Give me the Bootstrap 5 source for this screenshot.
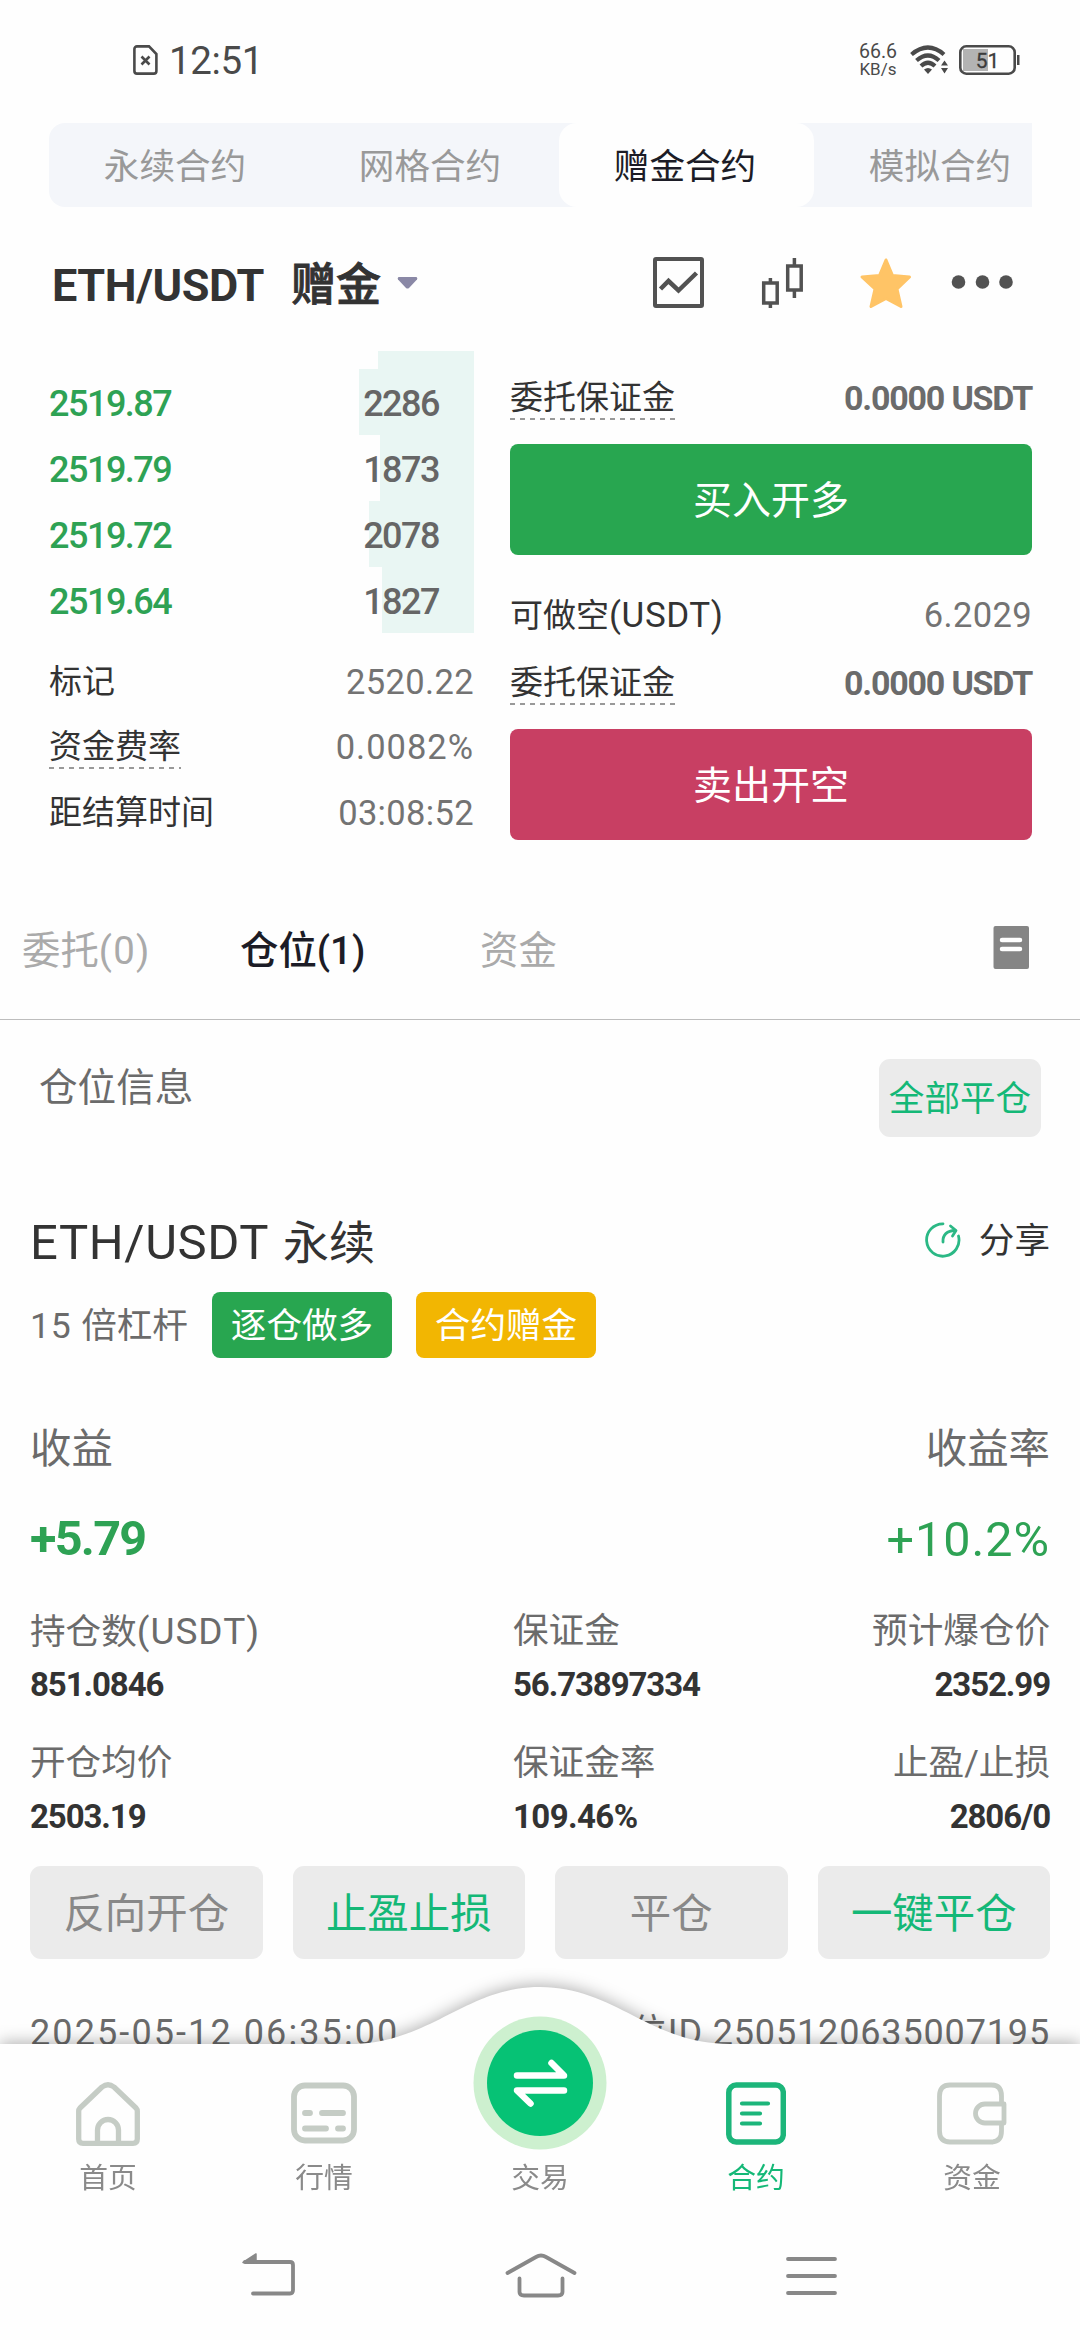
<!DOCTYPE html>
<html lang="zh-CN">
<head>
<meta charset="utf-8">
<meta name="viewport" content="width=device-width, initial-scale=1">
<title>ETH/USDT 赠金合约</title>
<link rel="stylesheet" href="https://cdn.jsdelivr.net/npm/bootstrap@5.3.0/dist/css/bootstrap.min.css">
<style>
  body { font-family: Roboto, "Noto Sans CJK SC", sans-serif; background: #fefefe; color: #333; font-size: 33px; line-height: 1; width: 1080px; height: 2340px; overflow: hidden; }
  svg { display: block; flex: none; }
  .screen { height: 2340px; overflow: hidden; }

  .status-bar { height: 120px; padding: 0 60px 0 133px; color: #4a4a4a; }
  .clock { font-size: 38.5px; letter-spacing: -.4px; margin-left: 11px; padding-top: 2px; }
  .net-speed { font-size: 19.5px; line-height: 18px; margin-right: 13px; }
  .net-speed .unit { font-size: 17px; line-height: 17px; }
  .battery { width: 61px; height: 30px; margin-left: 11px; }

  .mode-tabs { height: 84px; margin: 3px 48px 0 49px; background: #f4f6fa; border-radius: 16px 0 0 16px; overflow: hidden; }
  .mode-tabs .mode { flex: 0 0 255px; font-size: 35.6px; color: #999; border-radius: 18px; padding: 5px 3px 0 0; }
  .mode-tabs .mode.active { background: #fefefe; color: #1c1c26; }

  .pair-bar { height: 144px; padding: 8px 66px 0 52px; }
  .pair-name { font-size: 45px; font-weight: 700; letter-spacing: -.4px; padding-top: 4px; }
  .pair-kind { font-size: 45px; font-weight: 500; margin-left: 27px; -webkit-text-stroke: .9px #333; padding-top: 4px; }

  .trade-area { height: 540px; padding: 0 48px 0 49px; }
  .book { width: 425px; }
  .depth-row { height: 66px; padding: 4px 35px 0 0; font-weight: 500; font-size: 36px; letter-spacing: -1.5px; background: linear-gradient(#e9f6f3, #e9f6f3) right / var(--depth) 100% no-repeat; }
  .depth-row.cut { height: 18px; }
  .depth-price { color: #2ea254; }
  .depth-qty { color: #666; }
  .info-row { height: 65.5px; }
  .num { color: #737373; font-size: 34.5px; letter-spacing: .35px; }
  .num-bold { color: #6b6b6b; font-weight: 700; font-size: 34px; letter-spacing: -1.2px; }
  .hint { line-height: 43px; padding-bottom: 1px; background: repeating-linear-gradient(90deg, #999 0 5px, transparent 5px 10px) bottom / 100% 2px no-repeat; }
  .order-side { width: 522px; }
  .order-btn { height: 111px; border: 0; border-radius: 8px; font-size: 39px; color: #fff; padding: 4px 0 0; }
  .buy { background: #28a650; }
  .sell { background: #c83f63; }

  .list-tabs { height: 129px; padding: 0 50px 8px 22px; border-bottom: 1px solid #bdbdbd; font-size: 38.4px; color: #aaa; }
  .list-tabs .active { color: #1c1c26; font-weight: 500; }
  .positions-head { padding: 39px 39px 0 39px; font-size: 38.6px; color: #6b6b6b; }
  .soft-btn { background: #ebebeb; border: 0; border-radius: 11px; color: #888; padding: 4px 0 0; }
  .soft-btn.go { color: #14b877; }
  .close-all { width: 162px; height: 78px; font-size: 35.6px; }

  .position { padding: 70px 30px 0 30px; }
  .pos-title { height: 68px; font-size: 49px; padding-top: 2px; }
  .pos-title .cn { font-size: 46px; letter-spacing: 0; margin-left: 2px; }
  .pos-tag { width: 180px; height: 66px; border-radius: 8px; font-size: 35.6px; color: #fff; padding: 4px 0 0; font-weight: 400; }
  .gray { color: #6b6b6b; }
  .profit-label { margin-top: 61px; height: 60px; font-size: 41.4px; padding-top: 2px; }
  .profit-value { margin-top: 30px; height: 60px; font-size: 48.5px; color: #2ea254; }
  .stat-label { height: 48px; font-size: 35.6px; padding-top: 4px; }
  .stat-value { height: 48px; margin-top: 6px; font-size: 33px; font-weight: 700; letter-spacing: -1.1px; }
  .stat-label > :first-child, .stat-value > :first-child { width: 483px; }
  .pos-actions { margin-top: 26px; gap: 30px; }
  .pos-actions .btn { height: 93px; font-size: 41.4px; }
  .pos-foot { height: 48px; margin-top: 49px; font-size: 36px; padding-top: 2px; }

  .app-nav { height: 353px; }
  .nav-shape { filter: drop-shadow(0 -2px 8px rgba(0,0,0,.3)); }
  .nav-cell { width: 216px; font-size: 28.8px; color: #8a8a8a; }
  .nav-cell.active { color: #14b877; }
  .nav-items { padding-top: 29px; }
  .nav-icon { height: 133px; margin-bottom: 15px; }
  .nav-icon.flat { padding-top: 63px; }
  .sys-keys { padding: 60px 243px 0 242px; }
</style>
</head>
<body>
<div class="screen">

  <header class="status-bar d-flex align-items-center">
    <svg width="25" height="30" viewBox="0 0 25 30" fill="none" stroke="#4a4a4a" stroke-width="2.6"><path d="M4 1.4H16L23.4 9V26a2.6 2.6 0 0 1-2.6 2.6H4A2.6 2.6 0 0 1 1.4 26V4A2.6 2.6 0 0 1 4 1.4Z"/><path d="M8.5 11.5l8 8M16.5 11.5l-8 8"/></svg>
    <span class="clock">12:51</span>
    <div class="ms-auto text-center net-speed"><div>66.6</div><div class="unit">KB/s</div></div>
    <svg width="38" height="30" viewBox="0 0 38 30" fill="none" stroke="#4a4a4a" stroke-width="4.2"><path d="M1.5 9.5Q18 -4.5 34 9.5"/><path d="M6.5 15.5Q18 5.5 29 15.5"/><path d="M11 21Q18 14.5 25 21"/><path d="M14 24.5Q18 21.5 22 24.5L18 29Z" fill="#4a4a4a" stroke="none"/><path d="M31 20.5L34.5 15.5L38 20.5ZM31 23L34.5 28.5L38 23Z" fill="#4a4a4a" stroke="none"/></svg>
    <svg class="battery" viewBox="0 0 61 30"><rect x="4" y="4" width="25" height="22" fill="#b3b3b3"/><rect x="1.3" y="1.3" width="54.4" height="27.4" rx="6" fill="none" stroke="#4a4a4a" stroke-width="2.6"/><rect x="58" y="10" width="2.5" height="10" fill="#4a4a4a"/><text x="28.5" y="22.5" text-anchor="middle" font-size="21" fill="#3c3c3c" stroke="#3c3c3c" stroke-width=".3">51</text></svg>
  </header>

  <nav class="mode-tabs d-flex">
    <div class="mode d-flex align-items-center justify-content-center">永续合约</div>
    <div class="mode d-flex align-items-center justify-content-center">网格合约</div>
    <div class="mode active d-flex align-items-center justify-content-center">赠金合约</div>
    <div class="mode d-flex align-items-center justify-content-center">模拟合约</div>
  </nav>

  <div class="pair-bar d-flex align-items-center">
    <span class="pair-name">ETH/USDT</span><span class="pair-kind">赠金</span>
    <svg class="ms-3" width="21" height="12" viewBox="0 0 21 12"><path d="M1.5 0H19.5Q21 1 20 2.5L12 11Q10.5 12 9 11L1 2.5Q0 1 1.5 0Z" fill="#8a88a6"/></svg>
    <svg class="ms-auto" width="361" height="52" viewBox="0 0 361 52">
      <g fill="none" stroke="#525252">
        <rect x="2" y="2" width="47" height="47" rx="1" stroke-width="4"/>
        <path d="M7.500 32L15.500 24L25.500 33.500L43.500 16" stroke-width="4.500"/>
        <g stroke-width="3.500"><rect x="110.700" y="26" width="13.500" height="20"/><path d="M117.400 21V26M117.400 46V51"/><rect x="134.700" y="9" width="13.500" height="24"/><path d="M141.400 1V9M141.400 33V41"/></g>
      </g>
      <path d="M233 3L239.500 18.500L256.500 20L244 32L248 49.500L233 41.500L218 49.500L222 32L209 20L226.500 18.500Z" fill="#ffc466" stroke="#ffc466" stroke-width="3" stroke-linejoin="round"/>
      <g fill="#525252"><circle cx="305.500" cy="25" r="6.800"/><circle cx="329.500" cy="25" r="6.800"/><circle cx="353" cy="25" r="6.800"/></g>
    </svg>
  </div>

  <main>
    <section class="trade-area d-flex justify-content-between">
      <div class="book">
        <div class="depth-row cut" style="--depth:96px"></div>
        <div class="depth-row d-flex align-items-center justify-content-between" style="--depth:115px"><span class="depth-price">2519.87</span><span class="depth-qty">2286</span></div>
        <div class="depth-row d-flex align-items-center justify-content-between" style="--depth:94px"><span class="depth-price">2519.79</span><span class="depth-qty">1873</span></div>
        <div class="depth-row d-flex align-items-center justify-content-between" style="--depth:105px"><span class="depth-price">2519.72</span><span class="depth-qty">2078</span></div>
        <div class="depth-row d-flex align-items-center justify-content-between mb-3" style="--depth:92px"><span class="depth-price">2519.64</span><span class="depth-qty">1827</span></div>
        <div class="info-row d-flex align-items-center justify-content-between"><span>标记</span><span class="num">2520.22</span></div>
        <div class="info-row d-flex align-items-center justify-content-between"><span class="hint">资金费率</span><span class="num" style="letter-spacing:1px">0.0082%</span></div>
        <div class="info-row d-flex align-items-center justify-content-between"><span>距结算时间</span><span class="num">03:08:52</span></div>
      </div>
      <div class="order-side">
        <div class="d-flex align-items-center justify-content-between" style="height:93px"><span class="hint">委托保证金</span><span class="num-bold">0.0000 USDT</span></div>
        <button class="btn order-btn buy w-100">买入开多</button>
        <div class="d-flex align-items-center justify-content-between" style="height:90px;margin-top:15px"><span>可做空<span style="font-size:35px;letter-spacing:.6px">(USDT)</span></span><span class="num">6.2029</span></div>
        <div class="d-flex align-items-center justify-content-between" style="height:46px;margin-bottom:23px"><span class="hint">委托保证金</span><span class="num-bold">0.0000 USDT</span></div>
        <button class="btn order-btn sell w-100">卖出开空</button>
      </div>
    </section>

    <div class="list-tabs d-flex align-items-center">
      <span style="width:218px">委托<span style="letter-spacing:1.3px">(0)</span></span><span class="active" style="width:240px">仓位(1)</span><span>资金</span>
      <svg class="ms-auto mb-2" width="37" height="43" viewBox="0 0 37 43"><rect x=".5" width="35.5" height="43" rx="2" fill="#858585"/><path d="M9 14H27M9 23H27" stroke="#fff" stroke-width="4.5" stroke-linecap="round"/></svg>
    </div>

    <div class="positions-head d-flex justify-content-between">
      <span style="line-height:58px">仓位信息</span>
      <button class="btn soft-btn go close-all">全部平仓</button>
    </div>

    <section class="position">
      <div class="pos-title d-flex align-items-center justify-content-between">
        <span style="letter-spacing:.6px">ETH/USDT <span class="cn">永续</span></span>
        <span class="d-flex align-items-center" style="font-size:35.6px">
          <svg width="36" height="36" viewBox="0 0 36 36" style="margin:0 18px 4px 0" fill="none" stroke="#2bb885" stroke-width="2.8" stroke-linecap="round"><path d="M18 1.800A16.200 16.200 0 1 0 33.500 14"/><path d="M18 20C17.500 13 22 8.500 30 8.500"/><path d="M25.500 4L31 8.500L27.500 14" stroke-linejoin="round"/></svg>分享</span>
      </div>
      <div class="d-flex align-items-center" style="height:66px;margin-top:17px">
        <span class="gray" style="width:182px;padding-top:4px;font-size:35.600px"><span style="letter-spacing:.800px">15 </span>倍杠杆</span>
        <span class="badge pos-tag buy d-flex align-items-center justify-content-center">逐仓做多</span>
        <span class="badge pos-tag d-flex align-items-center justify-content-center ms-4" style="background:#f2b602">合约赠金</span>
      </div>
      <div class="profit-label gray d-flex align-items-center justify-content-between"><span>收益</span><span>收益率</span></div>
      <div class="profit-value d-flex align-items-center justify-content-between"><b style="letter-spacing:-1.700px">+5.79</b><span style="padding-top:3px;letter-spacing:1px">+10.2%</span></div>

      <div class="stat-label gray d-flex align-items-center" style="margin-top:37px"><span>持仓数<span style="font-size:37px;letter-spacing:1px">(USDT)</span></span><span>保证金</span><span class="ms-auto">预计爆仓价</span></div>
      <div class="stat-value d-flex align-items-center"><span>851.0846</span><span>56.73897334</span><span class="ms-auto">2352.99</span></div>
      <div class="stat-label gray d-flex align-items-center" style="margin-top:30px"><span>开仓均价</span><span>保证金率</span><span class="ms-auto">止盈/止损</span></div>
      <div class="stat-value d-flex align-items-center"><span>2503.19</span><span style="letter-spacing:-.6px">109.46%</span><span class="ms-auto">2806/0</span></div>

      <div class="pos-actions d-flex">
        <button class="btn soft-btn flex-fill w-25">反向开仓</button>
        <button class="btn soft-btn go flex-fill w-25">止盈止损</button>
        <button class="btn soft-btn flex-fill w-25">平仓</button>
        <button class="btn soft-btn go flex-fill w-25">一键平仓</button>
      </div>
      <div class="pos-foot gray d-flex align-items-center justify-content-between"><span style="letter-spacing:2.1px">2025-05-12 06:35:00</span><span style="letter-spacing:.85px">仓位ID 2505120635007195</span></div>
    </section>
  </main>

  <footer class="app-nav fixed-bottom">
    <svg class="nav-shape position-absolute top-0 start-0" width="1080" height="353" viewBox="0 0 1080 353"><path d="M-20 57H350C430 57 465 0 540 0S650 57 730 57H1100V380H-20Z" fill="#fefefe"/></svg>
    <div class="nav-items position-relative d-flex">
      <div class="nav-cell d-flex flex-column align-items-center">
        <div class="nav-icon flat d-flex align-items-center"><svg width="64" height="64" viewBox="0 0 64 64" fill="none" stroke="#c5ccc5" stroke-width="5.3" stroke-linejoin="round"><path d="M2.700 29Q2.700 27.500 4 26L26 5Q32 .500 38 5L60 26Q61.300 27.500 61.300 29V57Q61.300 61.300 57 61.300H7Q2.700 61.300 2.700 57Z"/><path d="M21.500 60V48a10.500 10.500 0 0 1 21 0V60"/></svg></div>
        <span>首页</span>
      </div>
      <div class="nav-cell d-flex flex-column align-items-center">
        <div class="nav-icon flat d-flex align-items-center"><svg width="66" height="64" viewBox="0 0 66 64" fill="none" stroke="#c5ccc5" stroke-width="5.8"><rect x="3" y="3.5" width="60" height="55" rx="11"/><path d="M14 31H19M31 31H52M14 46.500H35M47 46.500H52" stroke-linecap="round"/></svg></div>
        <span>行情</span>
      </div>
      <div class="nav-cell d-flex flex-column align-items-center">
        <div class="nav-icon d-flex align-items-center"><svg width="134" height="134" viewBox="0 0 134 134"><circle cx="67" cy="67" r="66.5" fill="#cdf0cf"/><circle cx="67" cy="67" r="53" fill="#06c275"/><path d="M44 59.500H91L78.500 47M91 74.500H44L57.500 87.500" fill="none" stroke="#fff" stroke-width="6.5" stroke-linecap="round" stroke-linejoin="round"/></svg></div>
        <span>交易</span>
      </div>
      <div class="nav-cell active d-flex flex-column align-items-center">
        <div class="nav-icon flat d-flex align-items-center"><svg width="60" height="64" viewBox="0 0 60 64" fill="none" stroke="#1cb57a" stroke-width="5.5"><rect x="2.8" y="3" width="54.5" height="57" rx="7.5"/><path d="M16 21.500H42M16 31.500H34M16 41.500H34" stroke-width="4.2" stroke-linecap="round"/></svg></div>
        <span>合约</span>
      </div>
      <div class="nav-cell d-flex flex-column align-items-center">
        <div class="nav-icon flat d-flex align-items-center"><svg width="70" height="64" viewBox="0 0 70 64" fill="none" stroke="#c5ccc5" stroke-width="4.8"><path d="M64.500 22V14Q64.500 3 54 3H13Q2.500 3 2.500 14V49Q2.500 60 13 60H54Q64.500 60 64.500 49V41"/><path d="M67 22H48a9.500 9.500 0 0 0 0 19H67Z" stroke-linejoin="round"/></svg></div>
        <span>资金</span>
      </div>
    </div>
    <div class="sys-keys position-relative d-flex justify-content-between">
      <svg width="54" height="44" viewBox="0 0 54 44" fill="none" stroke="#888" stroke-width="3.8" stroke-linecap="round"><path d="M3 9H48Q51 9 51 12V37Q51 40.500 48 40.500H11"/><path d="M1 9.500L14 1V10Z" fill="#888" stroke-width="1.5" stroke-linejoin="round"/></svg>
      <svg width="72" height="46" viewBox="0 0 72 46" fill="none" stroke="#888" stroke-width="3.8" stroke-linecap="round" stroke-linejoin="round"><path d="M2.500 20L31 4Q36 1 41 4L69.500 20"/><path d="M14.500 25.500V39Q14.500 42.500 19 42.500H53Q57.500 42.500 57.500 39V25.500"/></svg>
      <svg width="51" height="44" viewBox="0 0 51 44" stroke="#888" stroke-width="3.8" stroke-linecap="round"><path d="M2 6H49M2 23H49M2 40H49"/></svg>
    </div>
  </footer>
</div>
<script src="https://cdn.jsdelivr.net/npm/bootstrap@5.3.0/dist/js/bootstrap.bundle.min.js"></script>
</body>
</html>
